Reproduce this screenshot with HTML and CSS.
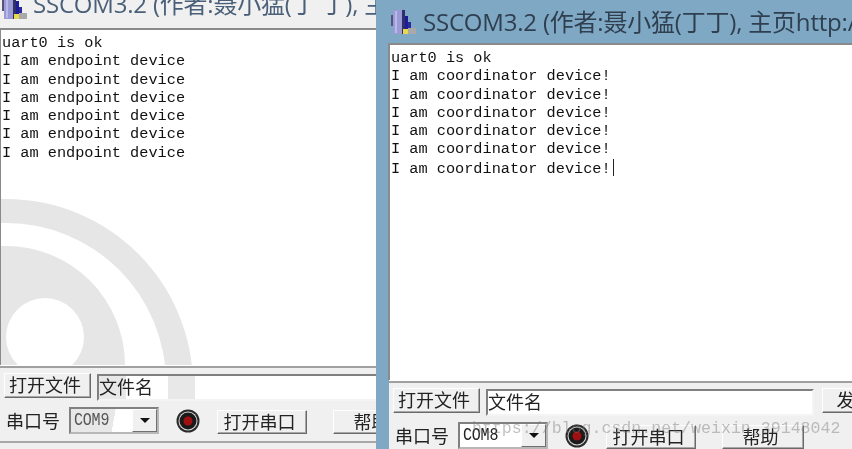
FILE: index.html
```html
<!DOCTYPE html>
<html lang="zh">
<head>
<meta charset="utf-8">
<title>SSCOM3.2</title>
<link rel="stylesheet" href="styles.css">
</head>
<body>
<main class="desktop">

  <section class="win win-back">
    <header class="title">
      <svg class="app-icon" viewBox="0 0 25 25"><rect x="0" y="6" width="3" height="11" fill="#55557a"/><rect x="2" y="1" width="9" height="24" fill="#9a9ad6"/><rect x="4" y="2" width="2" height="22" fill="#b9b9e6"/><rect x="11" y="1" width="3" height="24" fill="#2f2f6a"/><rect x="14" y="7" width="3" height="15" fill="#1c1c96"/><rect x="17" y="13" width="3" height="7" fill="#2a2aa0"/><rect x="12" y="20" width="5" height="5" fill="#e8d84a"/><rect x="17" y="19" width="8" height="6" fill="#a9a9a9"/></svg>
      <span class="title-text">SSCOM3.2 (作者:聂小猛(丁 丁), 主</span>
    </header>
    <div class="term">
      <svg class="swirl" viewBox="0 30 389 350"><circle cx="5" cy="386" r="187" fill="#e6e6e7"/><circle cx="5" cy="383" r="160" fill="#fff"/><circle cx="5" cy="365" r="119" fill="#e6e6e7"/><circle cx="44" cy="337" r="39" fill="#fff"/></svg>
      <div class="log">
        <div>uart0 is ok</div>
        <div>I am endpoint device</div>
        <div>I am endpoint device</div>
        <div>I am endpoint device</div>
        <div>I am endpoint device</div>
        <div>I am endpoint device</div>
        <div>I am endpoint device</div>
      </div>
    </div>
    <div class="row row-file">
      <button class="btn btn-file">打开文件</button>
      <div class="field field-swirl">文件名</div>
    </div>
    <div class="row row-port">
      <span class="port-label">串口号</span>
      <div class="combo combo-swirl"><span class="combo-text combo-dim">COM9</span><span class="combo-arrow"><i class="caret-down"></i></span></div>
      <svg class="led" viewBox="0 0 24 24"><circle cx="12" cy="12" r="11.5" fill="#2a2a2a"/><circle cx="12" cy="12" r="9.5" fill="#d8d8d8"/><circle cx="12" cy="12" r="8.5" fill="#1a1a1a"/><circle cx="12" cy="12" r="4.5" fill="#a01010"/></svg>
      <button class="btn btn-open">打开串口</button>
      <button class="btn btn-help">帮助</button>
    </div>
    <div class="status"><div class="status-strip"></div></div>
  </section>

  <section class="win win-front">
    <header class="title">
      <svg class="app-icon" viewBox="0 0 25 25"><rect x="0" y="6" width="3" height="11" fill="#55557a"/><rect x="2" y="1" width="9" height="24" fill="#9a9ad6"/><rect x="4" y="2" width="2" height="22" fill="#b9b9e6"/><rect x="11" y="1" width="3" height="24" fill="#2f2f6a"/><rect x="14" y="7" width="3" height="15" fill="#1c1c96"/><rect x="17" y="13" width="3" height="7" fill="#2a2aa0"/><rect x="12" y="20" width="5" height="5" fill="#e8d84a"/><rect x="17" y="19" width="8" height="6" fill="#a9a9a9"/></svg>
      <span class="title-text">SSCOM3.2 (作者:聂小猛(丁丁), 主页http:/</span>
    </header>
    <div class="term">
      <div class="log">
        <div>uart0 is ok</div>
        <div>I am coordinator device!</div>
        <div>I am coordinator device!</div>
        <div>I am coordinator device!</div>
        <div>I am coordinator device!</div>
        <div>I am coordinator device!</div>
        <div>I am coordinator device!<span class="cursor"></span></div>
      </div>
    </div>
    <div class="row row-file">
      <button class="btn btn-file">打开文件</button>
      <div class="field">文件名</div>
      <button class="btn btn-send">发送</button>
    </div>
    <div class="row row-port">
      <span class="port-label">串口号</span>
      <div class="combo"><span class="combo-text">COM8</span><span class="combo-arrow"><i class="caret-down"></i></span></div>
      <svg class="led" viewBox="0 0 24 24"><circle cx="12" cy="12" r="11.5" fill="#2a2a2a"/><circle cx="12" cy="12" r="9.5" fill="#d8d8d8"/><circle cx="12" cy="12" r="8.5" fill="#1a1a1a"/><circle cx="12" cy="12" r="4.5" fill="#a01010"/></svg>
      <button class="btn btn-open">打开串口</button>
      <button class="btn btn-help">帮助</button>
    </div>
  </section>

  <div class="watermark">https://blog.csdn.net/weixin_39148042</div>
</main>
</body>
</html>
```
FILE: styles.css
```css
* { box-sizing: border-box; }
html, body { margin: 0; height: 100%; overflow: hidden; background: #f0f0f0; }

.desktop {
  position: relative;
  width: 852px;
  height: 449px;
  overflow: hidden;
  filter: blur(0.35px);
  font-family: "Noto Sans CJK SC", "Liberation Sans", sans-serif;
  color: #222;
}

/* windows on a desktop */
.win {
  position: absolute;
  width: 500px;
  height: 480px;
  display: flex;
  flex-direction: column;
}
.win-back { left: -13px; top: -15px; background: #f0f0f0; }
.win-front { left: 376px; top: 0; background: #7fa8c4; }

.title {
  height: 43px;
  flex: none;
  display: flex;
  align-items: center;
  white-space: nowrap;
  overflow: hidden;
}
.app-icon { width: 25px; height: 25px; margin-left: 15px; flex: none; }
.title-text {
  margin-left: 7px;
  margin-top: -3px;
  font-family: "Open Sans", "Noto Sans CJK SC", sans-serif;
  font-size: 24px;
  letter-spacing: -0.2px;
  color: #2f3f50;
}
.win-back .title-text { color: #4a5f78; margin-left: 6px; margin-top: -8px; }

.term {
  position: relative;
  flex: none;
  height: 337px;
  margin-left: 12px;
  background: #fff;
  border-top: 2px solid #8a8a8a;
  border-left: 2px solid #8a8a8a;
  overflow: hidden;
}
.win-back .term { border-left-width: 1px; margin-left: 13px; }
.swirl {
  position: absolute;
  left: 0;
  top: 0;
  width: 389px;
  height: 350px;
}
.log {
  position: relative;
  padding: 4px 0 0 1px;
  font-family: "Liberation Mono", monospace;
  font-size: 15.25px;
  line-height: 18.3px;
  color: #111;
  white-space: nowrap;
}
.cursor {
  display: inline-block;
  width: 1px;
  height: 17px;
  margin-left: 2px;
  vertical-align: -3px;
  background: #222;
}

.row {
  display: flex;
  flex: none;
  align-items: flex-start;
  margin-left: 13px;
  background: #f0f0f0;
}
.row-file {
  height: 42px;
  padding: 7px 0 0 4px;
  border-top: 1px solid #fff;
  box-shadow: inset 0 3px 0 -1px #a0a0a0;
}
.row-port { height: 34px; padding-left: 6px; }

.btn {
  font: 18px/1 "Noto Sans CJK SC", sans-serif;
  color: #222;
  background: #f0f0f0;
  padding: 0 5px 3px 0;
  border: 1px solid;
  border-color: #fff #6a6a6a #6a6a6a #fff;
  box-shadow: inset -1px -1px 0 #a8a8a8;
  flex: none;
}
.btn-file { width: 87px; height: 25px; }
.btn-send { width: 70px; height: 25px; margin-left: 8px; }
.btn-open { width: 90px; height: 24px; margin-left: 17px; margin-top: 3px; }
.btn-help { width: 82px; height: 24px; margin-left: 26px; margin-top: 3px; }

.field {
  width: 328px;
  height: 27px;
  margin-left: 6px;
  margin-top: 1px;
  padding-left: 0;
  flex: none;
  font-size: 18px;
  line-height: 21px;
  color: #222;
  background: #fff;
  border: 2px solid;
  border-color: #808080 #f4f4f4 #f4f4f4 #808080;
}
.field-swirl {
  background: linear-gradient(90deg, #e8e8e8 0 27px, #fff 27px 69px, #e8e8e8 69px 96px, #fff 96px);
}

.port-label {
  width: 54px;
  flex: none;
  font-size: 18px;
  line-height: 27px;
  color: #222;
}
.combo {
  display: flex;
  width: 90px;
  height: 27px;
  margin-left: 9px;
  flex: none;
  background: #fff;
  border: 2px solid;
  border-color: #808080 #b8b8b8 #b8b8b8 #808080;
}
.combo-swirl { background: linear-gradient(100deg, #e8e8e8 0 44px, #fff 44px); }
.combo-text {
  flex: 1;
  padding-left: 3px;
  font-family: "Liberation Mono", monospace;
  font-size: 15px;
  letter-spacing: -0.2px;
  line-height: 23px;
  color: #222;
  transform: scaleY(1.2);
}
.combo-dim { color: #555; }
.combo-arrow {
  display: flex;
  align-items: center;
  justify-content: center;
  width: 25px;
  background: #f0f0f0;
  border: 1px solid;
  border-color: #fff #707070 #707070 #fff;
}
.caret-down {
  width: 0;
  height: 0;
  border-left: 5px solid transparent;
  border-right: 5px solid transparent;
  border-top: 5px solid #111;
}
.led { width: 24px; height: 24px; margin-left: 17px; margin-top: 2px; flex: none; }

.status {
  margin-left: 13px;
  padding-top: 7px;
  background: #f0f0f0;
  flex: 1;
  border-top: 2px solid #a8a8a8;
}
.status-strip { width: 160px; height: 4px; background: #e0e0e0; border-top: 1px solid #b0b0b0; }

.watermark {
  position: absolute;
  left: 472px;
  top: 419px;
  font-family: "Liberation Mono", monospace;
  font-size: 16.6px;
  line-height: 20px;
  color: rgba(120, 120, 120, 0.45);
  white-space: nowrap;
}
```
